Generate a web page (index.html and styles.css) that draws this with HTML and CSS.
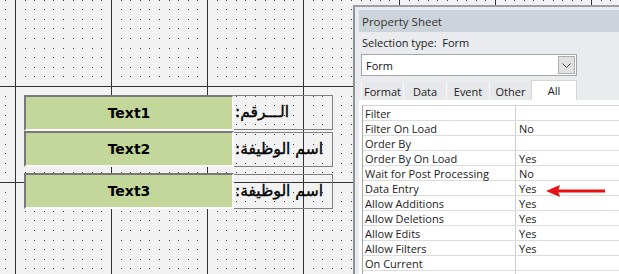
FILE: index.html
```html
<!DOCTYPE html>
<html lang="en">
<head>
<meta charset="utf-8">
<title>Form Design</title>
<link rel="stylesheet" href="styles.css">
</head>
<body>
<div class="designer">
  <svg class="grid" width="619" height="274" xmlns="http://www.w3.org/2000/svg">
    <defs>
      <path id="dotrow" d="M10 0h1v1h-1zM19 0h1v1h-1zM29 0h1v1h-1zM38 0h1v1h-1zM48 0h1v1h-1zM58 0h1v1h-1zM67 0h1v1h-1zM77 0h1v1h-1zM86 0h1v1h-1z"/>
      <pattern id="pg" patternUnits="userSpaceOnUse" x="15" y="-10" width="96" height="96">
        <g fill="#3a3a3a">
          <use href="#dotrow" y="10"/>
          <use href="#dotrow" y="19"/>
          <use href="#dotrow" y="29"/>
          <use href="#dotrow" y="38"/>
          <use href="#dotrow" y="48"/>
          <use href="#dotrow" y="58"/>
          <use href="#dotrow" y="67"/>
          <use href="#dotrow" y="77"/>
          <use href="#dotrow" y="86"/>
        </g>
        <rect x="0" y="0" width="1" height="96" fill="#333"/>
        <rect x="0" y="0" width="96" height="1" fill="#333"/>
      </pattern>
    </defs>
    <rect width="619" height="274" fill="url(#pg)"/>
  </svg>

  <div class="lbl l1" dir="rtl">الـــرقم:</div>
  <div class="lbl l2" dir="rtl">اسم الوظيفة:</div>
  <div class="lbl l3" dir="rtl">اسم الوظيفة:</div>

  <div class="txt t1">Text1</div>
  <div class="txt t2">Text2</div>
  <div class="txt t3">Text3</div>
</div>

<aside class="sheet">
  <div class="sheet-title">Property Sheet</div>
  <div class="seltype">Selection type:&nbsp;&nbsp;Form</div>
  <div class="combo">
    <span class="combo-text">Form</span>
    <span class="combo-btn">
      <svg width="9" height="5" viewBox="0 0 9 5"><path d="M0.5 0.5 L4.5 4.5 L8.5 0.5" fill="none" stroke="#444" stroke-width="1"/></svg>
    </span>
  </div>
  <div class="tabs">
    <div class="tab w42">Format</div>
    <div class="tab w43">Data</div>
    <div class="tab w43">Event</div>
    <div class="tab w42">Other</div>
    <div class="tab active">All</div>
  </div>
  <div class="panel">
    <div class="props">
      <div class="row"><span class="k">Filter</span><span class="v"></span></div>
      <div class="row"><span class="k">Filter On Load</span><span class="v">No</span></div>
      <div class="row"><span class="k">Order By</span><span class="v"></span></div>
      <div class="row"><span class="k">Order By On Load</span><span class="v">Yes</span></div>
      <div class="row"><span class="k">Wait for Post Processing</span><span class="v">No</span></div>
      <div class="row"><span class="k">Data Entry</span><span class="v">Yes</span></div>
      <div class="row"><span class="k">Allow Additions</span><span class="v">Yes</span></div>
      <div class="row"><span class="k">Allow Deletions</span><span class="v">Yes</span></div>
      <div class="row"><span class="k">Allow Edits</span><span class="v">Yes</span></div>
      <div class="row"><span class="k">Allow Filters</span><span class="v">Yes</span></div>
      <div class="row"><span class="k">On Current</span><span class="v"></span></div>
      <div class="row"><span class="k">&nbsp;</span><span class="v"></span></div>
    </div>
  </div>
</aside>

<svg class="arrow" width="70" height="20" viewBox="0 0 70 20" xmlns="http://www.w3.org/2000/svg">
  <path d="M16 9.5 H65 V12.5 H16 Z" fill="#e81010"/>
  <path d="M6 11 L20 5 L18 11 L20 17 Z" fill="#e81010"/>
</svg>
</body>
</html>
```

FILE: styles.css
```css
* { box-sizing: border-box; }
html, body { margin: 0; padding: 0; }
body {
  width: 619px;
  height: 274px;
  overflow: hidden;
  position: relative;
  background: #f2f2f2;
  font-family: "Open Sans", "Noto Sans", sans-serif;
}

.designer {
  position: relative;
  width: 619px;
  height: 274px;
}
.grid { position: absolute; left: 0; top: 0; display: block; }

/* controls on the design canvas */
.lbl {
  position: absolute;
  left: 233px;
  width: 100px;
  height: 35px;
  border: 1px solid #808080;
  display: flex;
  align-items: center;
  justify-content: flex-end;
  padding-left: 1px;
  padding-bottom: 1px;
  font: 15.5px "DejaVu Sans", sans-serif;
  -webkit-text-stroke: 0.35px #000;
  color: #000;
}
.l1 { top: 95px; }
.l2 { top: 132px; }
.l3 { top: 174px; }

.txt {
  position: absolute;
  left: 24px;
  width: 210px;
  height: 36px;
  background: #c4d79b;
  border: 2px solid;
  border-color: #787878 #fbfbfb #fbfbfb #787878;
  display: flex;
  align-items: center;
  justify-content: center;
  font: bold 14px "DejaVu Sans", sans-serif;
  color: #000;
}
.t1 { top: 95px; }
.t2 { top: 131px; }
.t3 { top: 173px; }

/* property sheet */
.sheet {
  position: absolute;
  left: 353px;
  top: 5px;
  width: 266px;
  height: 269px;
  overflow: hidden;
  background: #e9ebee;
  border-left: 2px solid #8e9399;
  border-top: 2px solid #9ca0a6;
  padding: 3px 0 0 4px;
  display: flex;
  flex-direction: column;
  font-size: 11px;
  color: #1b1b1b;
}
.sheet-title {
  height: 22px;
  flex: none;
  background: #cdd3da;
  display: flex;
  align-items: center;
  padding-left: 3px;
  font-size: 11.5px;
  color: #333;
}
.seltype {
  height: 20px;
  flex: none;
  display: flex;
  align-items: center;
  padding-left: 3px;
  color: #222;
}
.combo {
  margin: 2px 0 0 2px;
  width: 216px;
  height: 22px;
  flex: none;
  background: #fff;
  border: 1px solid #a6a6a6;
  display: flex;
  align-items: center;
  padding-left: 4px;
}
.combo-text { flex: 1; color: #111; }
.combo-btn {
  width: 17px;
  height: 18px;
  margin-right: 1px;
  background: #e1e1e1;
  border: 1px solid #adadad;
  display: flex;
  align-items: center;
  justify-content: center;
}
.combo-btn svg { display: block; }

.tabs {
  margin: 4px 0 0 2px;
  height: 20px;
  flex: none;
  display: flex;
  align-items: flex-end;
}
.tab {
  height: 18px;
  background: #e6e8eb;
  border-left: 1px solid #f8f8f8;
  display: flex;
  align-items: center;
  justify-content: center;
  color: #1b1b1b;
}
.w42 { width: 42px; }
.w43 { width: 43px; }
.tab.active {
  width: 46px;
  height: 20px;
  background: #fff;
  border: 1px solid #d6d6d6;
  border-bottom: none;
  padding-bottom: 1px;
}

.panel {
  flex: 1;
  min-height: 0;
  overflow: hidden;
  background: #fff;
  padding: 5px 0 0 3px;
}
.props {
  border-left: 1px solid #a9a9a9;
  border-top: 1px solid #d4d4d4;
}
.row {
  display: flex;
  height: 15px;
  border-bottom: 1px solid #dcdcdc;
  line-height: 14px;
}
.k {
  width: 153px;
  flex: none;
  border-right: 1px solid #cdcdcd;
  padding-left: 2px;
  padding-top: 1px;
}
.v {
  padding-left: 3px;
  padding-top: 1px;
}

.arrow {
  position: absolute;
  left: 540px;
  top: 180px;
  display: block;
}
```
